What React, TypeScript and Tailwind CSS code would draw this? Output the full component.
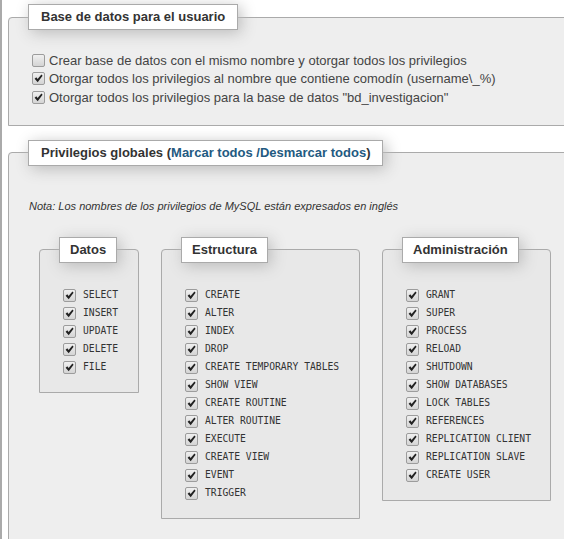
import React from "react";

const datos = ["SELECT", "INSERT", "UPDATE", "DELETE", "FILE"];
const estructura = [
  "CREATE",
  "ALTER",
  "INDEX",
  "DROP",
  "CREATE TEMPORARY TABLES",
  "SHOW VIEW",
  "CREATE ROUTINE",
  "ALTER ROUTINE",
  "EXECUTE",
  "CREATE VIEW",
  "EVENT",
  "TRIGGER",
];
const administracion = [
  "GRANT",
  "SUPER",
  "PROCESS",
  "RELOAD",
  "SHUTDOWN",
  "SHOW DATABASES",
  "LOCK TABLES",
  "REFERENCES",
  "REPLICATION CLIENT",
  "REPLICATION SLAVE",
  "CREATE USER",
];

function Box({ checked }: { checked: boolean }) {
  return (
    <span className="flex h-[13px] w-[13px] shrink-0 items-center justify-center rounded-[2px] border border-[#9c9c9c] bg-gradient-to-b from-[#f0f0f0] to-[#d4d4d4]">
      {checked && (
        <svg width="9" height="9" viewBox="0 0 9 9">
          <path d="M0.6 4.8 L2.3 3.3 L3.6 5 L7.4 0.6 L8.6 1.7 L3.7 8.2 Z" fill="#222" />
        </svg>
      )}
    </span>
  );
}

function Legend({ children, wide }: { children: React.ReactNode; wide?: boolean }) {
  return (
    <legend
      className={`ml-[19px] h-[26px] border border-[#aaa] bg-white ${wide ? "px-[12px]" : "px-[10px]"} text-[13px] font-bold leading-[24px] text-[#333] shadow-[3px_3px_15px_#bbb]`}
    >
      {children}
    </legend>
  );
}

function Group({ title, items, width }: { title: string; items: string[]; width: string }) {
  return (
    <fieldset className={`${width} shrink-0 rounded-t-[4px] border border-[#aaa] bg-[#e8e8e8]`}>
      <Legend>{title}</Legend>
      <div className="pl-[23px] pt-[24px] pb-[15px]">
        {items.map((p) => (
          <div key={p} className="flex h-[18px] items-center">
            <Box checked />
            <span className="ml-[7px] font-['DejaVu_Sans_Mono',monospace] text-[9.7px] text-[#333]">{p}</span>
          </div>
        ))}
      </div>
    </fieldset>
  );
}

export default function App() {
  return (
    <div className="flex h-[539px] w-[564px] overflow-hidden bg-white font-['Liberation_Sans',Arial,sans-serif]">
      <div className="w-[2px] shrink-0 bg-[#aaa]" />
      <div className="shrink-0 pl-[6px] pt-[4px]">
        <fieldset className="w-[600px] rounded-t-[4px] border border-[#aaa] bg-[#eee]">
          <Legend wide>Base de datos para el usuario</Legend>
          <div className="pl-[23px] pt-[21px] pb-[18px] text-[13px] text-[#444]">
            <div className="flex h-[18.5px] items-center">
              <Box checked={false} />
              <span className="ml-[4px]">Crear base de datos con el mismo nombre y otorgar todos los privilegios</span>
            </div>
            <div className="flex h-[18.5px] items-center">
              <Box checked />
              <span className="ml-[4px]">Otorgar todos los privilegios al nombre que contiene comodín (username\_%)</span>
            </div>
            <div className="flex h-[18.5px] items-center">
              <Box checked />
              <span className="ml-[4px]">Otorgar todos los privilegios para la base de datos "bd_investigacion"</span>
            </div>
          </div>
        </fieldset>

        <fieldset className="mt-[14px] h-[420px] w-[600px] rounded-t-[4px] border border-[#aaa] bg-[#eee]">
          <Legend wide>
            Privilegios globales (<span className="text-[#235a81]">Marcar todos</span>{" "}
            <span className="text-[#235a81]">/Desmarcar todos</span>)
          </Legend>
          <div className="pl-[20px] pt-[34px]">
            <p className="text-[11px] italic leading-[13px] text-[#333]">
              Nota: Los nombres de los privilegios de MySQL están expresados en inglés
            </p>
          </div>
          <div className="mt-[24px] flex items-start gap-[22px] pl-[30px]">
            <Group title="Datos" items={datos} width="w-[100px]" />
            <Group title="Estructura" items={estructura} width="w-[199px]" />
            <Group title="Administración" items={administracion} width="w-[169px]" />
          </div>
        </fieldset>
      </div>
    </div>
  );
}
